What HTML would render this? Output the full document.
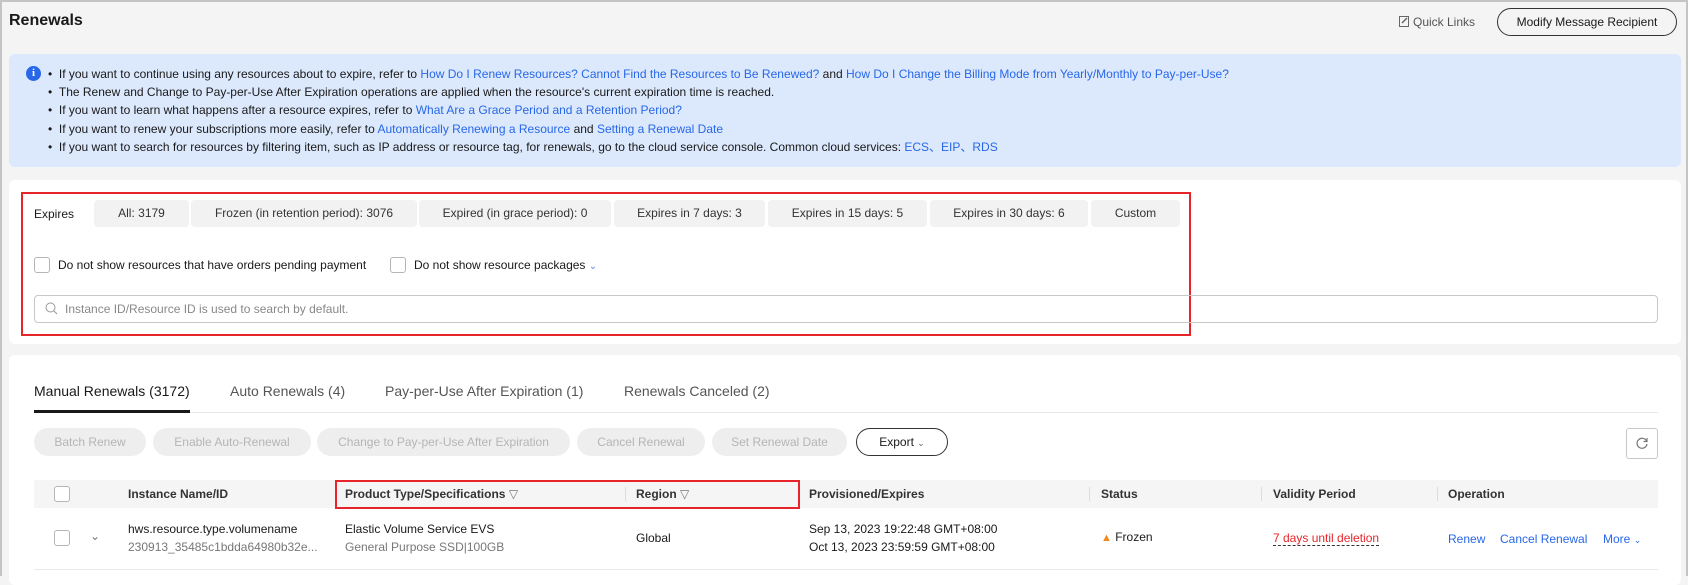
<!DOCTYPE html>
<html><head><meta charset="utf-8"><style>
*{box-sizing:border-box;margin:0;padding:0}
body{width:1688px;height:576px;overflow:hidden;background:#f4f4f4;font-family:"Liberation Sans",Arial,sans-serif;font-size:12px;color:#191919;position:relative;border:2px solid #c4c4c4;border-bottom:none}
.a{position:absolute;white-space:nowrap}
.link{color:#2767e8}
.card{position:absolute;background:#fff;border-radius:6px}
.chip{position:absolute;top:198px;height:27px;background:#f2f2f2;border-radius:4px;text-align:center;line-height:27px;color:#333}
.cb{position:absolute;width:16px;height:16px;border:1px solid #b5b5b5;border-radius:3px;background:#fff}
.btn{position:absolute;top:426px;height:28px;border-radius:14px;background:#eee;color:#b5b5b5;text-align:center;line-height:28px}
.th{position:absolute;top:478px;font-weight:bold;color:#333;line-height:28px}
.div{position:absolute;top:485px;width:1px;height:14px;background:#ddd}
</style></head><body>
<div class="a" style="left:7px;top:10px;font-size:16px;font-weight:bold">Renewals</div>
<div class="a" style="left:1397px;top:13px;color:#555;font-size:12px"><svg width="11" height="11" viewBox="0 0 11 11" style="vertical-align:-1px;margin-right:3px"><rect x="0.5" y="0.5" width="9" height="10" fill="none" stroke="#666"/><path d="M3 7L8 2" stroke="#666" stroke-width="1.5"/></svg>Quick Links</div>
<div class="a" style="left:1495px;top:6px;width:180px;height:28px;border:1px solid #333;border-radius:14px;text-align:center;line-height:26px">Modify Message Recipient</div>

<div class="a" style="left:7px;top:52px;width:1672px;height:113px;background:#dce9fd;border-radius:6px"></div>
<div class="a" style="left:24px;top:64px;width:15px;height:15px;border-radius:50%;background:#2767e8;color:#fff;font-weight:bold;font-size:11px;text-align:center;line-height:15px;font-family:'Liberation Serif',serif">i</div>
<div class="a" style="left:46px;top:63px;line-height:18.2px;font-size:12px">
• &nbsp;If you want to continue using any resources about to expire, refer to <span class="link">How Do I Renew Resources? Cannot Find the Resources to Be Renewed?</span> and <span class="link">How Do I Change the Billing Mode from Yearly/Monthly to Pay-per-Use?</span><br>
• &nbsp;The Renew and Change to Pay-per-Use After Expiration operations are applied when the resource's current expiration time is reached.<br>
• &nbsp;If you want to learn what happens after a resource expires, refer to <span class="link">What Are a Grace Period and a Retention Period?</span><br>
• &nbsp;If you want to renew your subscriptions more easily, refer to <span class="link">Automatically Renewing a Resource</span> and <span class="link">Setting a Renewal Date</span><br>
• &nbsp;If you want to search for resources by filtering item, such as IP address or resource tag, for renewals, go to the cloud service console. Common cloud services: <span class="link">ECS、EIP、RDS</span></div>

<div class="card" style="left:7px;top:178px;width:1672px;height:164px"></div>
<div class="a" style="left:19px;top:190px;width:1170px;height:144px;border:2px solid #e5252a"></div>
<div class="a" style="left:32px;top:205px;line-height:14px">Expires</div>
<div class="chip" style="left:92px;width:95px">All: 3179</div>
<div class="chip" style="left:189px;width:226px">Frozen (in retention period): 3076</div>
<div class="chip" style="left:417px;width:192px">Expired (in grace period): 0</div>
<div class="chip" style="left:612px;width:151px">Expires in 7 days: 3</div>
<div class="chip" style="left:766px;width:159px">Expires in 15 days: 5</div>
<div class="chip" style="left:928px;width:158px">Expires in 30 days: 6</div>
<div class="chip" style="left:1089px;width:89px">Custom</div>
<div class="cb" style="left:32px;top:255px"></div>
<div class="a" style="left:56px;top:256px">Do not show resources that have orders pending payment</div>
<div class="cb" style="left:388px;top:255px"></div>
<div class="a" style="left:412px;top:256px">Do not show resource packages <span style="color:#5b8def;font-size:10px">&#8964;</span></div>
<div class="a" style="left:32px;top:293px;width:1624px;height:28px;border:1px solid #c8c8c8;border-radius:4px"></div>
<svg class="a" style="left:43px;top:300px" width="13" height="13" viewBox="0 0 13 13"><circle cx="5.5" cy="5.5" r="4.5" fill="none" stroke="#999"/><path d="M9 9l3 3" stroke="#999"/></svg>
<div class="a" style="left:63px;top:300px;color:#888">Instance ID/Resource ID is used to search by default.</div>

<div class="card" style="left:7px;top:353px;width:1672px;height:230px"></div>
<div class="a" style="left:32px;top:381px;font-size:14px">Manual Renewals (3172)</div>
<div class="a" style="left:228px;top:381px;font-size:14px;color:#555">Auto Renewals (4)</div>
<div class="a" style="left:383px;top:381px;font-size:14px;color:#555">Pay-per-Use After Expiration (1)</div>
<div class="a" style="left:622px;top:381px;font-size:14px;color:#555">Renewals Canceled (2)</div>
<div class="a" style="left:32px;top:410px;width:1624px;height:1px;background:#e8e8e8"></div>
<div class="a" style="left:32px;top:408px;width:156px;height:3px;background:#191919"></div>

<div class="btn" style="left:32px;width:112px">Batch Renew</div>
<div class="btn" style="left:151px;width:158px">Enable Auto-Renewal</div>
<div class="btn" style="left:315px;width:253px">Change to Pay-per-Use After Expiration</div>
<div class="btn" style="left:575px;width:128px">Cancel Renewal</div>
<div class="btn" style="left:710px;width:135px">Set Renewal Date</div>
<div class="btn" style="left:854px;width:92px;background:#fff;border:1px solid #333;color:#191919;line-height:26px">Export <span style="font-size:9px;color:#666">&#8964;</span></div>
<div class="a" style="left:1624px;top:426px;width:32px;height:31px;border:1px solid #c8c8c8;border-radius:3px"></div>
<svg class="a" style="left:1633px;top:434px" width="14" height="14" viewBox="0 0 14 14"><path d="M11.5 5A5 5 0 1 0 12 8" fill="none" stroke="#777" stroke-width="1.2"/><path d="M12 2v3.5H8.5" fill="none" stroke="#777" stroke-width="1.2"/></svg>

<div class="a" style="left:32px;top:478px;width:1624px;height:28px;background:#f5f5f5"></div>
<div class="cb" style="left:52px;top:484px"></div>
<div class="th" style="left:126px">Instance Name/ID</div>
<div class="th" style="left:343px">Product Type/Specifications <span style="font-weight:normal;color:#777">&#9661;</span></div>
<div class="div" style="left:623px"></div>
<div class="th" style="left:634px">Region <span style="font-weight:normal;color:#777">&#9661;</span></div>
<div class="th" style="left:807px">Provisioned/Expires</div>
<div class="div" style="left:1087px"></div>
<div class="th" style="left:1099px">Status</div>
<div class="div" style="left:1259px"></div>
<div class="th" style="left:1271px">Validity Period</div>
<div class="div" style="left:1435px"></div>
<div class="th" style="left:1446px">Operation</div>
<div class="a" style="left:333px;top:478px;width:465px;height:29px;border:2px solid #e5252a"></div>

<div class="cb" style="left:52px;top:528px"></div>
<div class="a" style="left:88px;top:527px;color:#777;font-size:12px">&#8964;</div>
<div class="a" style="left:126px;top:520px">hws.resource.type.volumename</div>
<div class="a" style="left:126px;top:538px;color:#777">230913_35485c1bdda64980b32e...</div>
<div class="a" style="left:343px;top:520px">Elastic Volume Service EVS</div>
<div class="a" style="left:343px;top:538px;color:#777">General Purpose SSD|100GB</div>
<div class="a" style="left:634px;top:529px">Global</div>
<div class="a" style="left:807px;top:520px">Sep 13, 2023 19:22:48 GMT+08:00</div>
<div class="a" style="left:807px;top:538px">Oct 13, 2023 23:59:59 GMT+08:00</div>
<div class="a" style="left:1099px;top:528px"><span style="color:#f08a1c;font-size:11px">&#9650;</span> Frozen</div>
<div class="a" style="left:1271px;top:529px;color:#e5252a;border-bottom:1px dashed #333">7 days until deletion</div>
<div class="a link" style="left:1446px;top:530px">Renew</div>
<div class="a link" style="left:1498px;top:530px">Cancel Renewal</div>
<div class="a link" style="left:1601px;top:530px">More <span style="font-size:9px">&#8964;</span></div>
<div class="a" style="left:32px;top:567px;width:1624px;height:1px;background:#e8e8e8"></div>
</body></html>
